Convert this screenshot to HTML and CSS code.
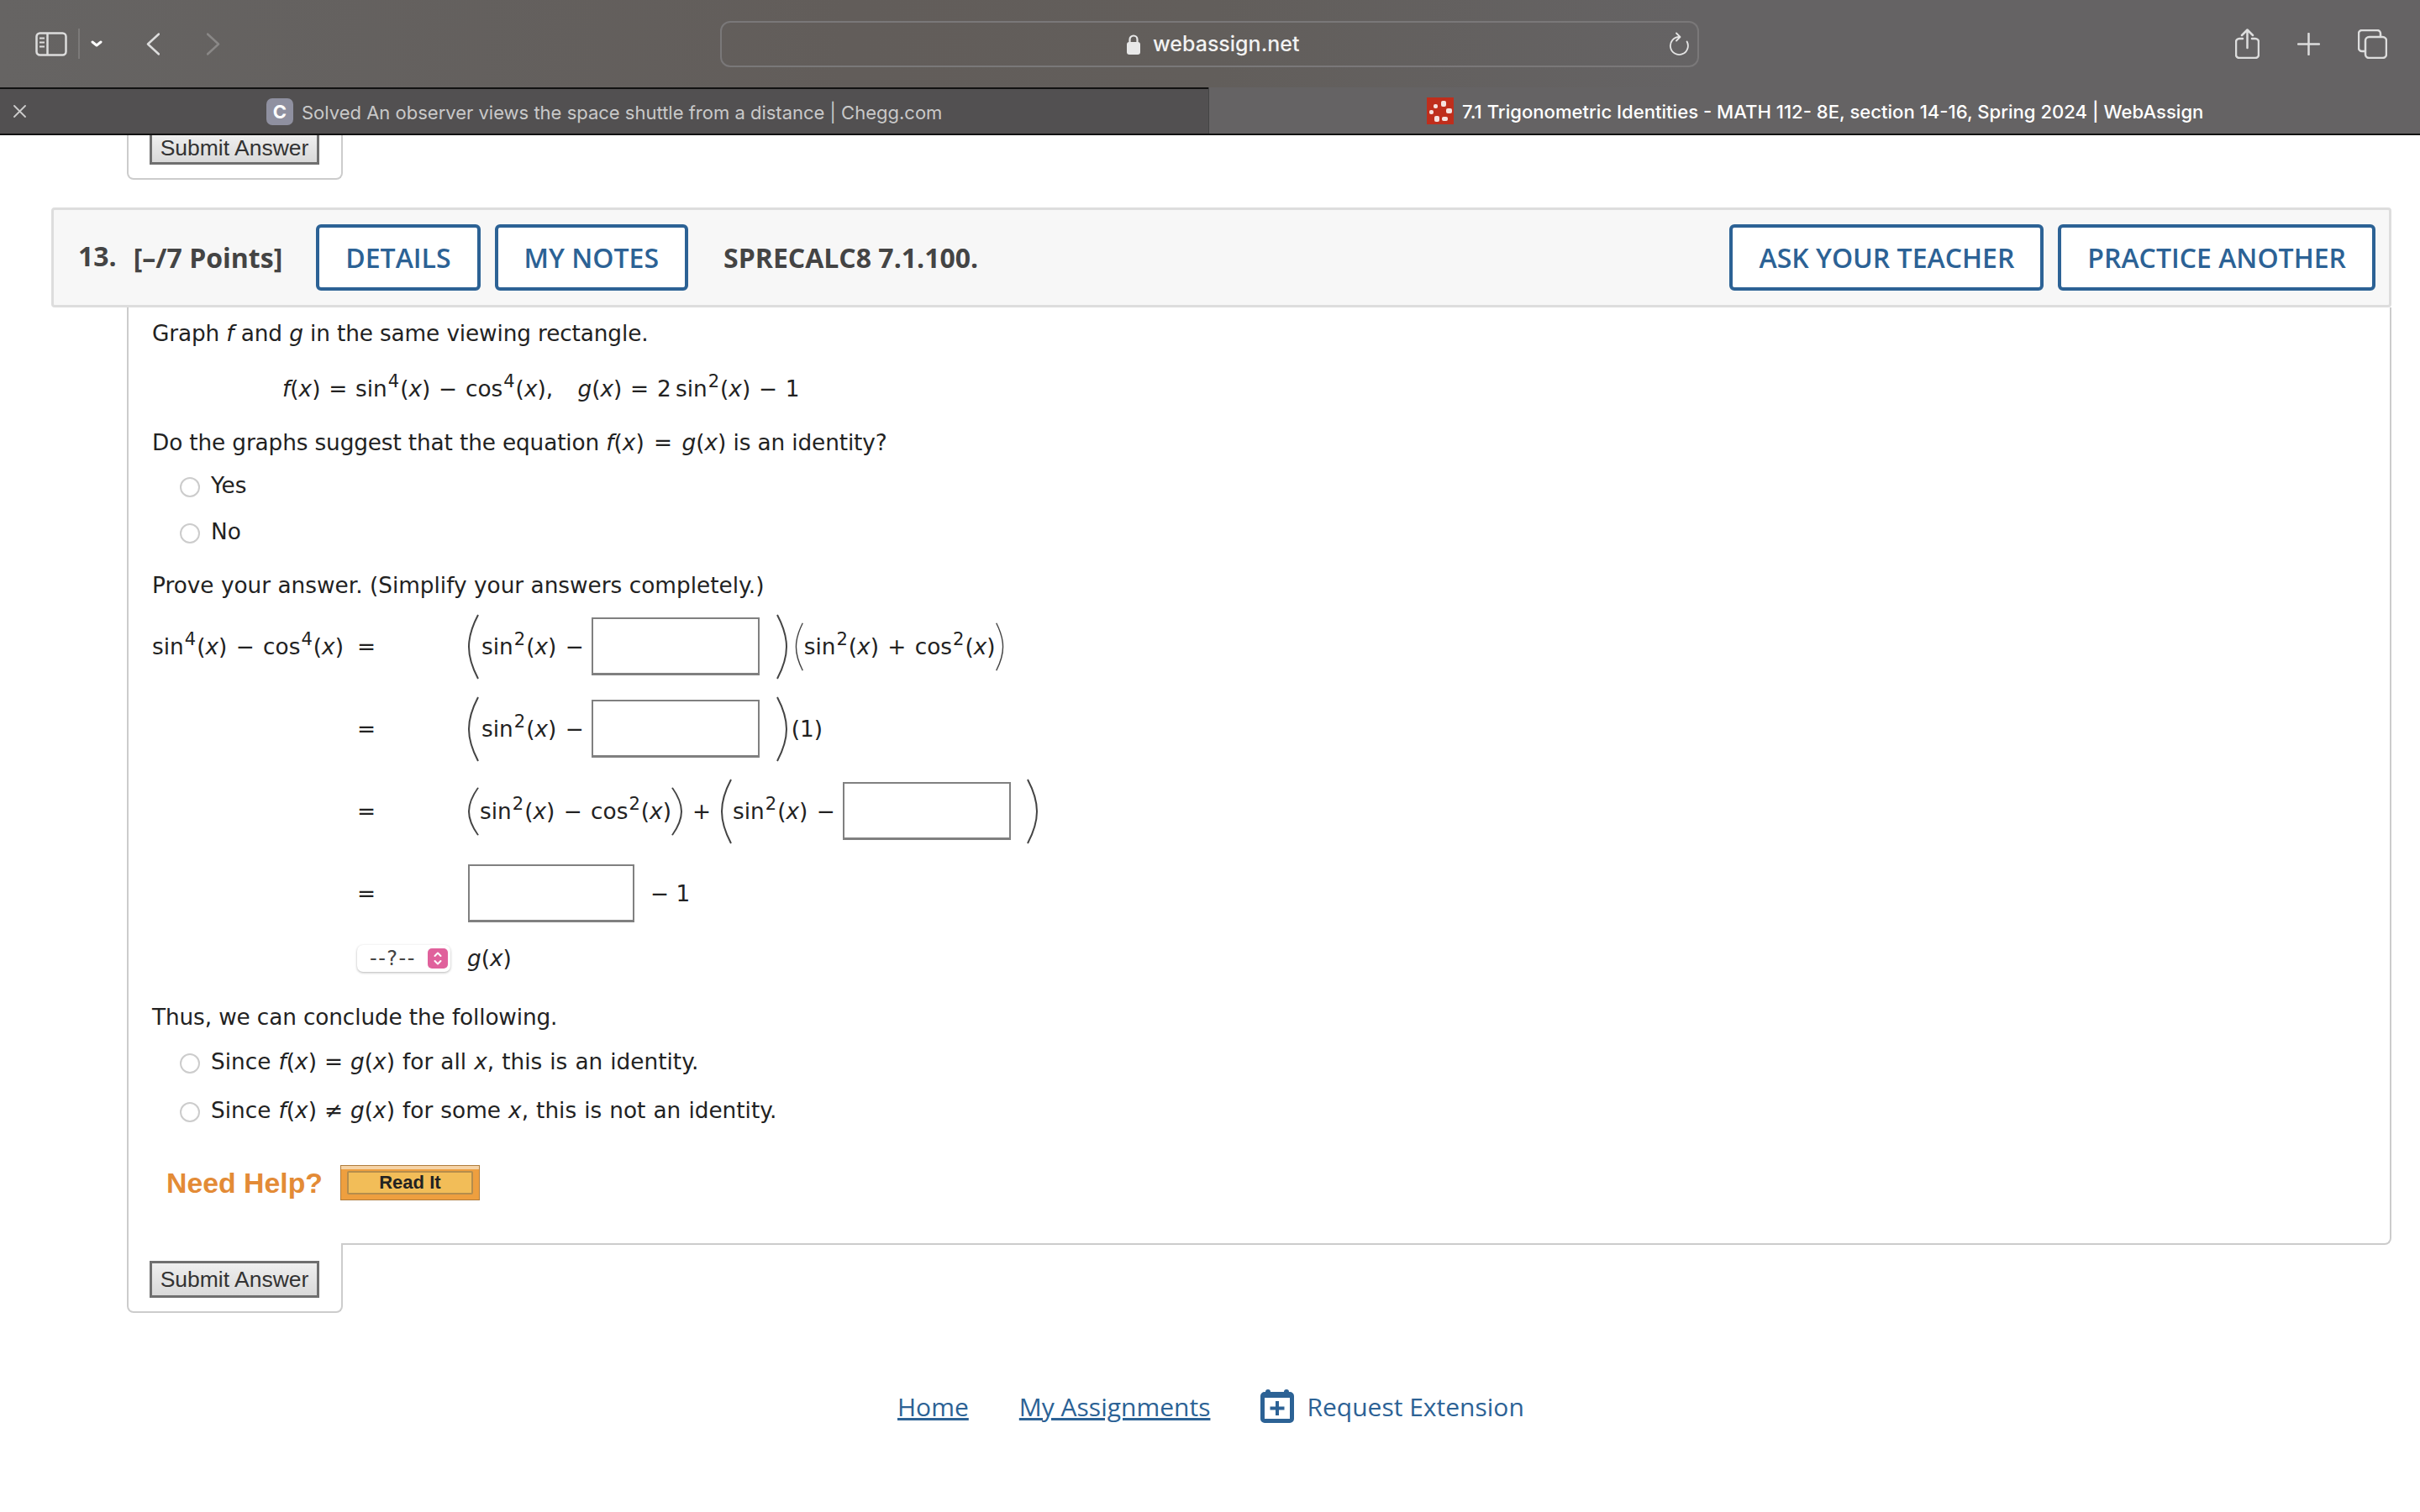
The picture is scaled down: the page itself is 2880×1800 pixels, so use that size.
FILE: index.html
```html
<!DOCTYPE html>
<html lang="en">
<head>
    <meta charset="UTF-8">
    <title>7.1 Trigonometric Identities - MATH 112- 8E, section 14-16, Spring 2024 | WebAssign</title>
    <link rel="stylesheet" href="styles.css">
</head>
<body>
    <svg class="defs" width="0" height="0">
        <symbol id="paren" viewBox="0 0 14 78" preserveAspectRatio="none">
            <path d="M13 1C4 18 2 30 2 39s2 21 11 38" fill="none" stroke="#444" stroke-width="2"/>
        </symbol>
    </svg>

    <header class="toolbar">
        <div class="toolbar-left">
            <svg class="icon-sidebar" width="38" height="29" viewBox="0 0 38 29" fill="none" stroke="#ddd" stroke-width="2.5">
                <rect x="1.5" y="1.5" width="35" height="26" rx="4"/>
                <path d="M14.5 1.5v26"/>
                <path d="M5 7.500h6M5 12.500h6M5 17.500h6" stroke-width="2"/>
            </svg>
            <span class="toolbar-divider"></span>
            <svg class="icon-chevron" width="14" height="8" viewBox="0 0 14 8" fill="none" stroke="#fff" stroke-width="3" stroke-linecap="round" stroke-linejoin="round">
                <path d="M2 2l5 4 5-4"/>
            </svg>
            <svg class="icon-back" width="16" height="27" viewBox="0 0 16 27" fill="none" stroke="#ddd" stroke-width="2.500" stroke-linecap="round" stroke-linejoin="round">
                <path d="M15 1.500L2 13.500l13 12"/>
            </svg>
            <svg class="icon-forward" width="16" height="27" viewBox="0 0 16 27" fill="none" stroke="#8a8887" stroke-width="2.500" stroke-linecap="round" stroke-linejoin="round">
                <path d="M1 1.500l13 12-13 12"/>
            </svg>
        </div>
        <div class="url-bar">
            <svg class="icon-lock" width="18" height="25" viewBox="0 0 18 25">
                <path d="M4.500 11V7a4.500 4.500 0 0 1 9 0v4" fill="none" stroke="#e8e8e8" stroke-width="2.200"/>
                <rect x="1" y="10" width="16" height="15" rx="3" fill="#e8e8e8"/>
            </svg>
            <span class="url-text">webassign.net</span>
            <svg class="icon-reload" width="25" height="28" viewBox="0 0 25 28" fill="none" stroke="#e4e4e4" stroke-width="1.800" stroke-linecap="round" stroke-linejoin="round">
                <path d="M21.600 11.500A10.500 10.500 0 1 1 12.500 6"/>
                <path d="M9 1.500l4.500 4.500L9 10.500"/>
            </svg>
        </div>
        <div class="toolbar-right">
            <svg width="29" height="36" viewBox="0 0 29 36" fill="none" stroke="#ddd" stroke-width="2.500" stroke-linecap="round" stroke-linejoin="round">
                <path d="M9 12H5a4 4 0 0 0-4 4v15a4 4 0 0 0 4 4h19a4 4 0 0 0 4-4V16a4 4 0 0 0-4-4h-4"/>
                <path d="M14.500 23V2M8 8l6.500-6.500L21 8"/>
            </svg>
            <svg width="27" height="27" viewBox="0 0 27 27" fill="none" stroke="#ddd" stroke-width="2.500" stroke-linecap="round">
                <path d="M13.500 1v25M1 13.500h25"/>
            </svg>
            <svg width="35" height="35" viewBox="0 0 35 35" fill="none" stroke="#ddd" stroke-width="2.500">
                <path d="M8 26H5a4 4 0 0 1-4-4V5a4 4 0 0 1 4-4h18a4 4 0 0 1 4 4v3"/>
                <rect x="9" y="9" width="25" height="25" rx="4.500"/>
            </svg>
        </div>
    </header>

    <nav class="tabs">
        <div class="tab tab-inactive">
            <svg class="icon-close" width="15" height="15" viewBox="0 0 15 15" stroke="#ccc" stroke-width="1.800" stroke-linecap="round">
                <path d="M1 1l13 13M14 1L1 14"/>
            </svg>
            <span class="favicon favicon-chegg">C</span>
            <span class="tab-title">Solved An observer views the space shuttle from a distance | Chegg.com</span>
        </div>
        <div class="tab tab-active">
            <svg class="favicon" width="32" height="32" viewBox="0 0 32 32">
                <rect width="32" height="32" fill="#bf2e1c"/>
                <g fill="#f6e2df">
                    <rect x="17" y="4" width="6" height="7" rx="2"/>
                    <rect x="23" y="13" width="7" height="6" rx="2"/>
                    <rect x="18" y="23" width="7" height="5" rx="2"/>
                    <rect x="9" y="22" width="6" height="7" rx="2"/>
                    <rect x="3" y="15" width="5" height="5" rx="2"/>
                    <rect x="8" y="8" width="5" height="5" rx="2"/>
                </g>
            </svg>
            <span class="tab-title">7.1 Trigonometric Identities - MATH 112- 8E, section 14-16, Spring 2024 | WebAssign</span>
        </div>
    </nav>

    <main class="page">
        <div class="submit-tab submit-tab-prev">
            <button class="submit-btn" type="button">Submit Answer</button>
        </div>

        <section class="question-head">
            <span class="q-num">13.</span>
            <span class="q-points">[&ndash;/7 Points]</span>
            <a class="head-btn btn-details">DETAILS</a>
            <a class="head-btn">MY NOTES</a>
            <span class="q-code">SPRECALC8 7.1.100.</span>
            <span class="head-spacer"></span>
            <a class="head-btn btn-ask">ASK YOUR TEACHER</a>
            <a class="head-btn">PRACTICE ANOTHER</a>
        </section>

        <section class="question-body">
            <p class="line line-first">Graph <i>f</i> and <i>g</i> in the same viewing rectangle.</p>
            <p class="line formula"><i>f</i>(<i>x</i>) = sin<sup>4</sup>(<i>x</i>) &minus; cos<sup>4</sup>(<i>x</i>), &nbsp; <i>g</i>(<i>x</i>) = 2&#8201;sin<sup>2</sup>(<i>x</i>) &minus; 1</p>
            <p class="line line-ask">Do the graphs suggest that the equation <span class="math"><i>f</i>(<i>x</i>) = <i>g</i>(<i>x</i>)</span> is an identity?</p>
            <label class="line choice choice-yes"><span class="radio"></span>Yes</label>
            <label class="line choice choice-no"><span class="radio"></span>No</label>
            <p class="line line-prove">Prove your answer. (Simplify your answers completely.)</p>

            <div class="proof">
                <div class="lhs"><span>sin<sup>4</sup>(<i>x</i>) &minus; cos<sup>4</sup>(<i>x</i>)</span></div>
                <div class="eq">=</div>
                <div class="rhs">
                    <svg class="paren paren-lg"><use href="#paren"/></svg>
                    <span class="term">sin<sup>2</sup>(<i>x</i>) &minus;</span>
                    <input class="blank" type="text">
                    <svg class="paren paren-lg paren-close"><use href="#paren"/></svg>
                    <svg class="paren paren-sm"><use href="#paren"/></svg>
                    <span class="term-tight">sin<sup>2</sup>(<i>x</i>) + cos<sup>2</sup>(<i>x</i>)</span>
                    <svg class="paren paren-sm paren-close"><use href="#paren"/></svg>
                </div>

                <div class="lhs"></div>
                <div class="eq">=</div>
                <div class="rhs">
                    <svg class="paren paren-lg"><use href="#paren"/></svg>
                    <span class="term">sin<sup>2</sup>(<i>x</i>) &minus;</span>
                    <input class="blank" type="text">
                    <svg class="paren paren-lg paren-close"><use href="#paren"/></svg>
                    <span class="term-one">(1)</span>
                </div>

                <div class="lhs"></div>
                <div class="eq">=</div>
                <div class="rhs">
                    <svg class="paren paren-md"><use href="#paren"/></svg>
                    <span class="term-tight">sin<sup>2</sup>(<i>x</i>) &minus; cos<sup>2</sup>(<i>x</i>)</span>
                    <svg class="paren paren-md paren-close"><use href="#paren"/></svg>
                    <span class="plus">+</span>
                    <svg class="paren paren-lg"><use href="#paren"/></svg>
                    <span class="term-tight">sin<sup>2</sup>(<i>x</i>) &minus;</span>
                    <input class="blank blank-r3" type="text">
                    <svg class="paren paren-lg paren-close"><use href="#paren"/></svg>
                </div>

                <div class="lhs"></div>
                <div class="eq">=</div>
                <div class="rhs">
                    <input class="blank blank-r4" type="text">
                    <span class="minus-one">&minus; 1</span>
                </div>

                <div class="lhs lhs-last"></div>
                <div class="eq eq-last">
                    <div class="select-box">
                        <span>--?--</span>
                        <span class="select-arrows">
                            <svg width="12" height="18" viewBox="0 0 12 18" fill="none" stroke="#fff" stroke-width="2" stroke-linecap="round" stroke-linejoin="round">
                                <path d="M2.500 6L6 2.500 9.500 6M2.500 12L6 15.500 9.500 12"/>
                            </svg>
                        </span>
                    </div>
                </div>
                <div class="rhs rhs-last"><span><i>g</i>(<i>x</i>)</span></div>
            </div>

            <p class="line line-thus">Thus, we can conclude the following.</p>
            <label class="line choice choice-same"><span class="radio"></span><span>Since <i>f</i>(<i>x</i>) = <i>g</i>(<i>x</i>) for all <i>x</i>, this is an identity.</span></label>
            <label class="line choice choice-diff"><span class="radio"></span><span>Since <i>f</i>(<i>x</i>) &ne; <i>g</i>(<i>x</i>) for some <i>x</i>, this is not an identity.</span></label>

            <div class="help">
                <span class="help-label">Need Help?</span>
                <a class="read-it"><span>Read It</span></a>
            </div>
        </section>

        <div class="submit-tab">
            <button class="submit-btn" type="button">Submit Answer</button>
        </div>

        <footer class="page-links">
            <a class="link-home" href="#">Home</a>
            <a class="link-assign" href="#">My Assignments</a>
            <span class="extension">
                <svg width="40" height="40" viewBox="0 0 40 40">
                    <path d="M9 0a3 3 0 0 1 3 3h16a3 3 0 0 1 6 0h1a5 5 0 0 1 5 5v27a5 5 0 0 1-5 5H5a5 5 0 0 1-5-5V8a5 5 0 0 1 5-5h1a3 3 0 0 1 3-3z" fill="#2c6295"/>
                    <rect x="5" y="10" width="30" height="25" fill="#fff"/>
                    <path d="M20 14v17M11.500 22.500h17" stroke="#2c6295" stroke-width="4"/>
                </svg>
                Request Extension
            </span>
        </footer>
    </main>
</body>
</html>
```

FILE: styles.css
```css
body {
    margin: 0;
    width: 2880px;
    height: 1800px;
    overflow: hidden;
    background-color: white;
    font-family: "DejaVu Sans", Verdana, sans-serif;
    font-size: 26.33px;
    color: #222;
}

.defs {
    display: block;
}

/* browser chrome */
.toolbar {
    display: flex;
    align-items: center;
    height: 104px;
    background: linear-gradient(90deg, #666463 0, #625d5a 35%, #625e5b 50%, #656364 70%);
}

.toolbar-left {
    display: flex;
    align-items: center;
    width: 857px;
    padding-left: 42px;
    box-sizing: border-box;
}

.toolbar-divider {
    width: 2px;
    height: 36px;
    margin: 0 13px;
    background-color: #7c7a79;
}

.icon-back {
    margin-left: 52px;
}

.icon-forward {
    margin-left: 56px;
}

.url-bar {
    display: flex;
    align-items: center;
    width: 1165px;
    height: 55px;
    box-sizing: border-box;
    padding: 0 9px 0 481px;
    border: 2px solid #7a7879;
    border-radius: 12px;
}

.url-text {
    margin-left: 14px;
    font-family: Inter, sans-serif;
    font-size: 25px;
    font-weight: 500;
    color: #f2f2f2;
}

.icon-reload {
    margin-left: auto;
}

.toolbar-right {
    display: flex;
    align-items: center;
    gap: 45px;
    margin-left: 638px;
}

.tabs {
    display: flex;
    height: 57px;
    box-sizing: border-box;
    border-bottom: 2px solid #111;
    font-family: Inter, sans-serif;
    font-size: 22px;
}

.tab {
    display: flex;
    align-items: center;
    box-sizing: border-box;
}

.tab-title {
    padding-top: 2px;
}

.tab-inactive {
    width: 1438px;
    padding-left: 16px;
    border-top: 2px solid #111;
    background-color: #525051;
    color: #c9c9c9;
}

.tab-active {
    flex: 1;
    padding-left: 259px;
    border-left: 1px solid #444;
    background-color: #656364;
    color: #fff;
    font-size: 22.100px;
    font-weight: 500;
}

.favicon {
    flex: none;
    margin-right: 10px;
}

.favicon-chegg {
    display: flex;
    align-items: center;
    justify-content: center;
    width: 32px;
    height: 32px;
    margin-left: 286px;
    border-radius: 7px;
    background-color: #8f90a0;
    color: white;
    font-weight: 700;
    font-size: 22px;
}

/* page */
.submit-tab {
    position: relative;
    width: 257px;
    height: 83px;
    box-sizing: border-box;
    margin-left: 151px;
    margin-top: -2px;
    padding: 21px 0 0 25px;
    background-color: white;
    border: 2px solid #ccc;
    border-top: none;
    border-radius: 0 0 8px 8px;
}

.submit-tab-prev {
    height: 53px;
    margin-top: 0;
    padding-top: 0;
}

.submit-tab-prev .submit-btn {
    height: 35px;
    padding-bottom: 12px;
    border-top: none;
}

.submit-btn {
    display: block;
    width: 202px;
    height: 44px;
    box-sizing: border-box;
    padding: 0;
    border: 3px solid #6f6f6f;
    background: linear-gradient(#efefef, #d9d9d9);
    font-family: "Liberation Sans", Arial, sans-serif;
    font-size: 26.500px;
    color: #333;
}

.question-head {
    display: flex;
    align-items: center;
    width: 2785px;
    height: 119px;
    box-sizing: border-box;
    margin: 33px 0 0 61px;
    padding: 0 16px 0 29px;
    background-color: #f7f7f7;
    border: 3px solid #ddd;
    border-radius: 4px;
    font-family: "Open Sans", sans-serif;
    font-size: 32px;
    font-weight: 700;
    color: #444;
}

.q-num {
    font-size: 32px;
    margin-top: -4px;
}

.q-points {
    margin-left: 20px;
}

.head-btn {
    display: flex;
    align-items: center;
    height: 79px;
    box-sizing: border-box;
    padding: 0 31px;
    margin-left: 17px;
    background-color: white;
    border: 4px solid #2c6295;
    border-radius: 6px;
    font-weight: 600;
    color: #2c6295;
}

.btn-details {
    margin-left: 40px;
}

.btn-ask {
    margin-left: 0;
}

.q-code {
    margin-left: 42px;
}

.head-spacer {
    flex: 1;
}

.question-body {
    width: 2695px;
    box-sizing: border-box;
    margin-left: 151px;
    padding: 13px 0 51px 28px;
    border: 2px solid #ccc;
    border-top: none;
    border-bottom-right-radius: 8px;
}

.line {
    display: block;
    margin: 0;
    height: 36px;
    line-height: 36px;
    white-space: nowrap;
}

sup {
    margin: 0 1px;
    font-size: 80%;
    line-height: 0;
    vertical-align: 11px;
}

.line-first,
.line-thus {
    letter-spacing: -0.13px;
}

.proof {
    word-spacing: 2px;
}

.formula {
    margin: 30px 0 0 155px;
    word-spacing: 1.400px;
}

.line-ask {
    margin-top: 28px;
    letter-spacing: -0.14px;
}

.math {
    letter-spacing: 0;
    word-spacing: 3px;
}

.choice {
    display: flex;
    align-items: center;
    padding-left: 33px;
    word-spacing: 0.700px;
}

.radio {
    flex: none;
    width: 24px;
    height: 24px;
    box-sizing: border-box;
    margin-right: 13px;
    margin-top: 4px;
    border: 2px solid #ccc;
    border-radius: 50%;
    background-color: white;
}

.choice-yes {
    margin-top: 15px;
}

.choice-no {
    margin-top: 19px;
}

.line-prove {
    margin-top: 28px;
}

/* the worked proof */
.proof {
    display: grid;
    grid-template-columns: 244px 131px 1fr;
    grid-template-rows: repeat(4, 98px) 56px;
    margin-top: 6px;
}

.lhs,
.eq,
.rhs {
    display: flex;
    align-items: center;
    white-space: nowrap;
}

.paren {
    flex: none;
}

.paren-lg {
    width: 14px;
    height: 78px;
}

.paren-md {
    width: 14px;
    height: 58px;
}

.paren-sm {
    width: 10px;
    height: 58px;
}

.paren-close {
    transform: scaleX(-1);
}

.term {
    margin-left: 3px;
}

.blank {
    width: 200px;
    height: 69px;
    box-sizing: border-box;
    margin: 0 20px 2px 9px;
    padding: 0;
    border: 2px solid #808080;
    border-bottom-width: 3px;
    background-color: white;
}

.paren-lg + .paren-sm {
    margin-left: 8px;
}

.term-one {
    margin-left: 4px;
}

.term-tight {
    margin-left: 1px;
}

.plus {
    margin: 0 11px;
}

.blank-r3 {
    margin-right: 19px;
}

.blank-r4 {
    margin-left: 1px;
    margin-right: 19px;
    width: 198px;
}

.minus-one {
    word-spacing: 0;
}

.select-box {
    display: flex;
    align-items: center;
    justify-content: space-between;
    width: 111px;
    height: 32px;
    box-sizing: border-box;
    padding: 0 3px 0 15px;
    border-radius: 7px;
    background-color: white;
    box-shadow: 0 1px 3px rgba(0, 0, 0, 0.3);
    font-size: 24px;
    letter-spacing: 1.500px;
    color: #444;
}

.select-arrows {
    display: flex;
    align-items: center;
    justify-content: center;
    width: 24px;
    height: 24px;
    border-radius: 5px;
    background-color: #e0619c;
}

.line-thus {
    margin-top: 24px;
}

.choice-same {
    margin-top: 17px;
}

.choice-diff {
    margin-top: 22px;
}

.help {
    display: flex;
    align-items: center;
    height: 42px;
    margin-top: 47px;
    padding-left: 17px;
}

.help-label {
    font-family: "Liberation Sans", Arial, sans-serif;
    font-size: 33.800px;
    font-weight: 700;
    color: #e38b36;
}

.read-it {
    display: flex;
    width: 166px;
    height: 42px;
    box-sizing: border-box;
    margin-left: 21px;
    padding: 6px 7px;
    background-color: #ee9f3f;
    border: 1px solid #b07c3c;
    box-shadow: inset 0 4px 0 #f6d3a6;
}

.read-it span {
    flex: 1;
    display: flex;
    align-items: center;
    justify-content: center;
    border: 2px solid #b58d4c;
    border-radius: 2px;
    background-color: #f2bd58;
    font-family: "Liberation Sans", Arial, sans-serif;
    font-size: 22px;
    font-weight: 700;
    color: #222;
}

.page-links {
    display: flex;
    align-items: center;
    height: 40px;
    margin: 91px 0 0 1068px;
    font-family: "Open Sans", sans-serif;
    font-size: 30px;
    color: #2c6295;
}

.page-links a {
    color: #2c6295;
}

.link-assign {
    margin-left: 60px;
}

.extension {
    display: flex;
    align-items: center;
    gap: 15px;
    margin-left: 60px;
}
```
